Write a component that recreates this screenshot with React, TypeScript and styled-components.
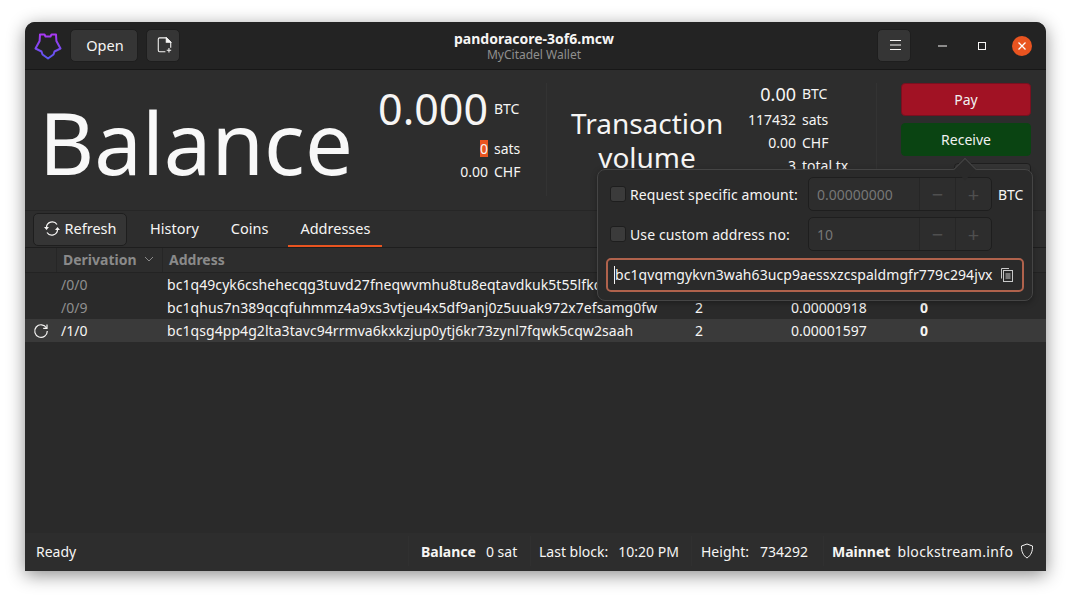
import React from 'react'
import styled, { createGlobalStyle } from 'styled-components'

const GlobalStyle = createGlobalStyle`
  html, body {
    margin: 0;
    padding: 0;
    background: #ffffff;
  }
  body {
    font-family: "Noto Sans", "Open Sans", sans-serif;
    font-size: 14px;
    color: #f6f5f4;
  }
`

const Page = styled.div`
  width: 1071px;
  height: 599px;
  padding: 22px 25px 28px;
  box-sizing: border-box;
  overflow: hidden;
`

const Window = styled.div`
  position: relative;
  width: 1021px;
  height: 549px;
  display: flex;
  flex-direction: column;
  background: #2a2a2a;
  border-radius: 10px 10px 0 0;
  box-shadow: 0 4px 18px rgba(0, 0, 0, 0.45);
  overflow: hidden;
`

const TitleBar = styled.div`
  height: 47px;
  flex: none;
  display: flex;
  align-items: center;
  padding: 0 4px 0 9px;
  background: #232323;
  border-bottom: 1px solid #171717;
`

const BarGroup = styled.div`
  flex: 1 1 0;
  display: flex;
  align-items: center;
  gap: 8px;
`

const BarGroupEnd = styled(BarGroup)`
  justify-content: flex-end;
  gap: 0;
`

const ToolButton = styled.button<{ $w: number }>`
  width: ${p => p.$w}px;
  height: 33px;
  flex: none;
  padding: 0 0 2px 2px;
  display: flex;
  align-items: center;
  justify-content: center;
  background: #353535;
  border: 1px solid #1e1e1e;
  border-radius: 5px;
  color: #f6f5f4;
  font: inherit;
  font-size: 14.5px;
`

const LogoMark = styled.svg`
  width: 28px;
  height: 30px;
  flex: none;
`

const TitleBlock = styled.div`
  display: flex;
  flex-direction: column;
  align-items: center;
  margin-right: 8px;
  padding-top: 1px;
`

const WindowName = styled.div`
  font-weight: 700;
  font-size: 14px;
  line-height: 17px;
  margin-top: -1px;
`

const WindowSub = styled.div`
  font-size: 12px;
  line-height: 14px;
  margin-top: 1px;
  color: #8f8f8f;
`

const WindowControl = styled.div`
  width: 40px;
  height: 33px;
  display: flex;
  align-items: center;
  justify-content: center;
`

const MinimizeControl = styled(WindowControl)`
  margin-left: 11px;
`

const CloseDot = styled.div`
  width: 20px;
  height: 20px;
  border-radius: 50%;
  background: #e95420;
  display: flex;
  align-items: center;
  justify-content: center;
`

const Summary = styled.div`
  height: 141px;
  flex: none;
  display: flex;
  background: #2d2d2d;
  padding: 13px 14px 0 14px;
  box-sizing: border-box;
  border-bottom: 1px solid #262626;
`

const BalanceTitle = styled.div`
  width: 339px;
  font-size: 85px;
  line-height: 108px;
  font-weight: 400;
  color: #f8f8f8;
  margin-top: 5px;
`

const AmountGrid = styled.div<{ $w: number; $valueCol: number; $firstRow: number }>`
  width: ${p => p.$w}px;
  display: grid;
  grid-template-columns: ${p => p.$valueCol}px auto;
  grid-template-rows: ${p => p.$firstRow}px;
  grid-auto-rows: 23px;
  column-gap: 6px;
  align-items: start;
  align-content: start;
`

const AmountValue = styled.div<{ $size?: number; $lead?: number }>`
  font-size: ${p => p.$size ?? 14}px;
  line-height: ${p => p.$lead ?? 23}px;
  text-align: right;
`

const AmountUnit = styled.div<{ $lead?: number }>`
  font-size: 14px;
  line-height: ${p => p.$lead ?? 23}px;
  white-space: nowrap;
`

const SatsZero = styled.span`
  display: inline-block;
  width: 8px;
  line-height: 17px;
  text-align: center;
  background: #e95420;
`

const Divider = styled.div`
  width: 1px;
  height: 113px;
  flex: none;
  background: #333333;
`

const VolumeTitle = styled.div`
  width: 152px;
  margin: 23px 0 0 24px;
  font-size: 28px;
  line-height: 34px;
  font-weight: 400;
  white-space: nowrap;
  text-align: center;
`

const ActionColumn = styled.div`
  margin-left: 24px;
  width: 130px;
  display: flex;
  flex-direction: column;
  align-items: flex-end;
  gap: 7px;
`

const ActionButton = styled.button<{ $bg: string; $edge: string }>`
  width: 100%;
  height: 33px;
  flex: none;
  padding: 0;
  background: ${p => p.$bg};
  border: 1px solid ${p => p.$edge};
  border-radius: 4px;
  color: #f1f1f1;
  font: inherit;
`

const GhostButton = styled.button`
  width: 77px;
  height: 30px;
  flex: none;
  background: #353535;
  border: 1px solid #1e1e1e;
  border-radius: 4px;
`

const TabBar = styled.div`
  height: 36px;
  flex: none;
  display: flex;
  align-items: center;
  gap: 8px;
  background: #2d2d2d;
  padding-left: 8px;
  border-bottom: 1px solid #1e1e1e;
`

const RefreshButton = styled.button`
  width: 94px;
  height: 33px;
  margin-right: 3px;
  display: flex;
  align-items: center;
  justify-content: center;
  gap: 5px;
  padding: 0 0 2px;
  background: #353535;
  border: 1px solid #1e1e1e;
  border-radius: 5px;
  color: #f6f5f4;
  font: inherit;
  font-size: 14.5px;
`

const Tab = styled.div<{ $active?: boolean }>`
  height: 36px;
  padding: 0 12px;
  display: flex;
  align-items: center;
  box-sizing: border-box;
  font-size: 14.5px;
  border-bottom: 2px solid ${p => (p.$active ? '#e95420' : 'transparent')};
`

const Table = styled.div`
  flex: 1;
  display: flex;
  flex-direction: column;
`

const TableHead = styled.div`
  height: 24px;
  flex: none;
  display: flex;
  align-items: center;
  border-bottom: 1px solid #232323;
  background: #2d2d2d;
  font-weight: 700;
  color: #8a8a8a;
`

const HeadCell = styled.div<{ $w: number }>`
  width: ${p => p.$w}px;
  height: 100%;
  padding: 0 0 2px 6px;
  box-sizing: border-box;
  display: flex;
  align-items: center;
  gap: 7px;
  border-left: 1px solid #262626;
`

const TableRow = styled.div<{ $selected?: boolean }>`
  height: 23px;
  display: grid;
  grid-template-columns: 31px 106px 533px 96px 129px 1fr;
  align-items: center;
  background: ${p => (p.$selected ? '#3a3a3a' : 'transparent')};
`

const RowIcon = styled.div`
  display: flex;
  align-items: center;
  padding-left: 8px;
`

const PathCell = styled.div<{ $dim?: boolean }>`
  padding-left: 5px;
  color: ${p => (p.$dim ? '#8f8f8f' : '#f6f5f4')};
`

const AddressCell = styled.div`
  padding-left: 5px;
  white-space: nowrap;
  overflow: hidden;
  letter-spacing: 0.065px;
`

const BoldCell = styled.div`
  font-weight: 700;
`

const StatusBar = styled.div`
  height: 36px;
  padding: 0 0 2px 11px;
  flex: none;
  display: flex;
  align-items: center;
  background: #2d2d2d;
`

const StatusText = styled.div`
  flex: 1;
`

const StatusSection = styled.div<{ $w: number; $pad: number; $gap: number }>`
  width: ${p => p.$w}px;
  height: 30px;
  box-sizing: border-box;
  padding-left: ${p => p.$pad}px;
  display: flex;
  align-items: center;
  gap: ${p => p.$gap}px;
  white-space: nowrap;
  border-left: 1px solid #303030;
`

const Strong = styled.span`
  font-weight: 700;
`

const ServerName = styled.span`
  letter-spacing: 0.35px;
`

const Popover = styled.div`
  position: absolute;
  left: 572px;
  top: 147px;
  width: 436px;
  height: 132px;
  box-sizing: border-box;
  padding: 4px 8px 0 8px;
  display: flex;
  flex-direction: column;
  background: #2a2a2a;
  border: 1px solid #454545;
  border-radius: 8px;
  box-shadow: 0 2px 6px rgba(0, 0, 0, 0.3);
`

const PopoverArrow = styled.div`
  position: absolute;
  right: 59px;
  top: -9px;
  width: 15px;
  height: 15px;
  background: #2a2a2a;
  border-left: 1px solid #454545;
  border-top: 1px solid #454545;
  transform: rotate(45deg);
`

const FormRow = styled.div`
  height: 40px;
  flex: none;
  display: flex;
  align-items: center;
`

const CheckBox = styled.div`
  width: 16px;
  height: 16px;
  flex: none;
  box-sizing: border-box;
  margin: 0 4px;
  background: #3b3b3b;
  border: 1px solid #1e1e1e;
  border-radius: 3px;
`

const FormLabel = styled.div`
  width: 178px;
  flex: none;
  white-space: nowrap;
  letter-spacing: 0.12px;
`

const Spinner = styled.div`
  width: 184px;
  height: 34px;
  flex: none;
  box-sizing: border-box;
  display: flex;
  background: #2d2d2d;
  border: 1px solid #1e1e1e;
  border-radius: 5px;
  color: #777777;
`

const SpinnerValue = styled.div`
  flex: 1;
  display: flex;
  align-items: center;
  padding-left: 8px;
`

const SpinnerStep = styled.div`
  width: 35px;
  flex: none;
  display: flex;
  align-items: center;
  justify-content: center;
  border-left: 1px solid #262626;
  font-size: 20px;
  color: #4f4f4f;
`

const FormUnit = styled.div`
  margin-left: 6px;
`

const AddressField = styled.div`
  width: 418px;
  height: 34px;
  margin-top: 4px;
  flex: none;
  box-sizing: border-box;
  display: flex;
  align-items: center;
  padding: 0 9px 0 6px;
  gap: 7px;
  background: #2a2a2a;
  border: 2px solid #b0624c;
  border-radius: 5px;
`

const AddressValue = styled.div`
  flex: 1;
  white-space: nowrap;
  overflow: hidden;
  border-left: 1px solid #f6f5f4;
  line-height: 18px;
  letter-spacing: 0.08px;
`

const LogoIcon = () => (
  <LogoMark viewBox="0 0 28 30" fill="none">
    <defs>
      <linearGradient id="logoGrad" x1="0" y1="0" x2="0" y2="1">
        <stop offset="0" stopColor="#a938f2" />
        <stop offset="1" stopColor="#5b57f0" />
      </linearGradient>
    </defs>
    <path
      d="M6 3.500H10.500L11.500 5.500H16.500L17.500 3.500H22L22.400 10L26.500 17.500L20.500 20.500L19.500 23.500L14 27.500L8.500 23.500L7.500 20.500L1.500 17.500L5.600 10Z"
      stroke="url(#logoGrad)"
      strokeWidth="2"
      strokeLinejoin="round"
    />
  </LogoMark>
)

const NewFileIcon = () => (
  <svg width="15" height="16" viewBox="0 0 16 18" fill="none" stroke="#f6f5f4" strokeWidth="1.200">
    <path d="M9 16.500H2.500a1.500 1.500 0 0 1-1.500-1.500V2.500A1.500 1.500 0 0 1 2.500 1H10l5 5v6" />
    <path d="M10 1v5h5z" fill="#f6f5f4" />
    <path d="M13 12.500v5M10.500 15h5" />
  </svg>
)

const RefreshIcon = () => (
  <svg width="16" height="15" viewBox="0 0 16 15" fill="none" stroke="#f6f5f4" strokeWidth="1.200">
    <path d="M2.500 6.500A5.700 5.700 0 0 1 13 3.500" />
    <path d="M13.500 8.500A5.700 5.700 0 0 1 3 11.500" />
    <path d="M0 6h5l-2.500 3zM16 9h-5l2.500-3z" fill="#f6f5f4" stroke="none" />
  </svg>
)

const ReloadIcon = () => (
  <svg width="16" height="16" viewBox="0 0 16 16" fill="none" stroke="#f6f5f4" strokeWidth="1.200">
    <path d="M13.500 5A6.300 6.300 0 1 0 14.300 8" />
    <path d="M14 1.500V5.300h-3.800" />
  </svg>
)

const CopyIcon = () => (
  <svg width="13" height="14" viewBox="0 0 13 14" fill="none" stroke="#c9c9c9" strokeWidth="1">
    <path d="M1.500 10.500V.5h7.500" />
    <rect x="3.500" y="2.500" width="9" height="11" />
    <path d="M5.500 6h5M5.500 8h5M5.500 10h5" />
  </svg>
)

const ShieldIcon = () => (
  <svg width="14" height="16" viewBox="0 0 14 16" fill="none" stroke="#f6f5f4" strokeWidth="1">
    <path d="M7 1l5.500 2c.3 5-1.500 9.500-5.500 12C3 12.500 1.200 8 1.500 3z" />
  </svg>
)

const ROWS = [
  { path: '/0/0', address: 'bc1q49cyk6cshehecqg3tuvd27fneqwvmhu8tu8eqtavdkuk5t55lfkq', dim: true },
  { path: '/0/9', address: 'bc1qhus7n389qcqfuhmmz4a9xs3vtjeu4x5df9anj0z5uuak972x7efsamg0fw', count: '2', amount: '0.00000918', dim: true },
  { path: '/1/0', address: 'bc1qsg4pp4g2lta3tavc94rrmva6kxkzjup0ytj6kr73zynl7fqwk5cqw2saah', count: '2', amount: '0.00001597', selected: true },
]

export default function App() {
  return (
    <Page>
      <GlobalStyle />
      <Window>
        <TitleBar>
          <BarGroup>
            <LogoIcon />
            <ToolButton $w={68}>Open</ToolButton>
            <ToolButton $w={34}><NewFileIcon /></ToolButton>
          </BarGroup>
          <TitleBlock>
            <WindowName>pandoracore-3of6.mcw</WindowName>
            <WindowSub>MyCitadel Wallet</WindowSub>
          </TitleBlock>
          <BarGroupEnd>
            <ToolButton $w={34}>
              <svg width="11" height="10" viewBox="0 0 11 10" stroke="#f6f5f4"><path d="M0 .5h11M0 5h11M0 9.500h11" /></svg>
            </ToolButton>
            <MinimizeControl>
              <svg width="9" height="2" viewBox="0 0 9 2" stroke="#f6f5f4"><path d="M0 1h9" /></svg>
            </MinimizeControl>
            <WindowControl>
              <svg width="8" height="8" viewBox="0 0 8 8" fill="none" stroke="#f6f5f4"><rect x=".5" y=".5" width="7" height="7" /></svg>
            </WindowControl>
            <WindowControl>
              <CloseDot>
                <svg width="8" height="8" viewBox="0 0 8 8" stroke="#ffffff" strokeWidth="1.300"><path d="M.5.5l7 7M7.500.5l-7 7" /></svg>
              </CloseDot>
            </WindowControl>
          </BarGroupEnd>
        </TitleBar>

        <Summary>
          <BalanceTitle>Balance</BalanceTitle>
          <AmountGrid $w={168} $valueCol={110} $firstRow={54}>
            <AmountValue $size={43} $lead={52}>0.000</AmountValue>
            <AmountUnit $lead={52}>BTC</AmountUnit>
            <AmountValue><SatsZero>0</SatsZero></AmountValue>
            <AmountUnit>sats</AmountUnit>
            <AmountValue>0.00</AmountValue>
            <AmountUnit>CHF</AmountUnit>
          </AmountGrid>
          <Divider />
          <VolumeTitle>Transaction<br />volume</VolumeTitle>
          <AmountGrid $w={153} $valueCol={73} $firstRow={25}>
            <AmountValue $size={18} $lead={22}>0.00</AmountValue>
            <AmountUnit $lead={22}>BTC</AmountUnit>
            <AmountValue>117432</AmountValue>
            <AmountUnit>sats</AmountUnit>
            <AmountValue>0.00</AmountValue>
            <AmountUnit>CHF</AmountUnit>
            <AmountValue>3</AmountValue>
            <AmountUnit>total tx</AmountUnit>
          </AmountGrid>
          <Divider />
          <ActionColumn>
            <ActionButton $bg="#a11224" $edge="#7a1020">Pay</ActionButton>
            <ActionButton $bg="#0a4412" $edge="#0a4412">Receive</ActionButton>
            <GhostButton />
          </ActionColumn>
        </Summary>

        <TabBar>
          <RefreshButton><RefreshIcon />Refresh</RefreshButton>
          <Tab>History</Tab>
          <Tab>Coins</Tab>
          <Tab $active>Addresses</Tab>
        </TabBar>

        <Table>
          <TableHead>
            <HeadCell $w={31} />
            <HeadCell $w={106}>
              Derivation
              <svg width="10" height="6" viewBox="0 0 10 6" fill="none" stroke="#8a8a8a"><path d="M1 1l4 4 4-4" /></svg>
            </HeadCell>
            <HeadCell $w={300}>Address</HeadCell>
          </TableHead>
          {ROWS.map(row => (
            <TableRow key={row.path} $selected={row.selected}>
              <RowIcon>{row.selected && <ReloadIcon />}</RowIcon>
              <PathCell $dim={row.dim}>{row.path}</PathCell>
              <AddressCell>{row.address}</AddressCell>
              <div>{row.count}</div>
              <div>{row.amount}</div>
              <BoldCell>{row.count && '0'}</BoldCell>
            </TableRow>
          ))}
        </Table>

        <StatusBar>
          <StatusText>Ready</StatusText>
          <StatusSection $w={122} $pad={12} $gap={10}><Strong>Balance</Strong>0 sat</StatusSection>
          <StatusSection $w={161} $pad={8} $gap={10}>Last block:<span>10:20 PM</span></StatusSection>
          <StatusSection $w={132} $pad={9} $gap={11}>Height:<span>734292</span></StatusSection>
          <StatusSection $w={223} $pad={8} $gap={7}><Strong>Mainnet</Strong><ServerName>blockstream.info</ServerName><ShieldIcon /></StatusSection>
        </StatusBar>

        <Popover>
          <PopoverArrow />
          <FormRow>
            <CheckBox />
            <FormLabel>Request specific amount:</FormLabel>
            <Spinner>
              <SpinnerValue>0.00000000</SpinnerValue>
              <SpinnerStep>−</SpinnerStep>
              <SpinnerStep>+</SpinnerStep>
            </Spinner>
            <FormUnit>BTC</FormUnit>
          </FormRow>
          <FormRow>
            <CheckBox />
            <FormLabel>Use custom address no:</FormLabel>
            <Spinner>
              <SpinnerValue>10</SpinnerValue>
              <SpinnerStep>−</SpinnerStep>
              <SpinnerStep>+</SpinnerStep>
            </Spinner>
          </FormRow>
          <AddressField>
            <AddressValue>bc1qvqmgykvn3wah63ucp9aessxzcspaldmgfr779c294jvx</AddressValue>
            <CopyIcon />
          </AddressField>
        </Popover>
      </Window>
    </Page>
  )
}
